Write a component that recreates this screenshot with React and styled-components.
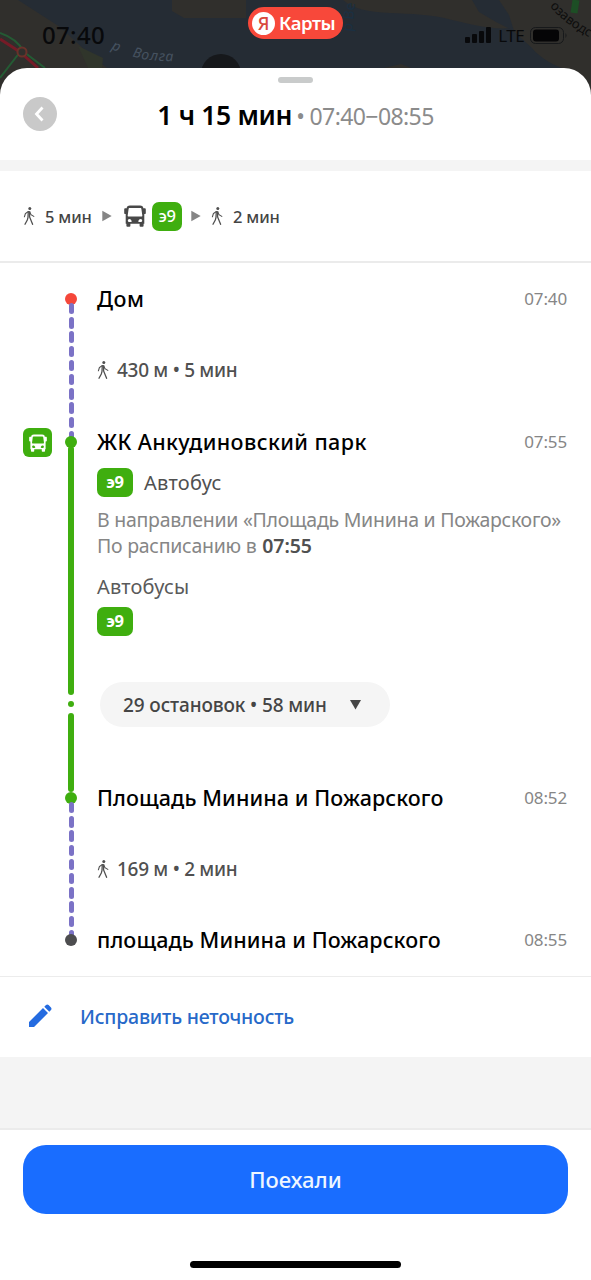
import React from 'react';
import styled, { createGlobalStyle } from 'styled-components';

const GlobalStyle = createGlobalStyle`
  * {
    box-sizing: border-box;
  }
  body {
    margin: 0;
    background: #fff;
    font-family: 'Noto Sans', 'Open Sans', sans-serif;
  }
`;

const green = '#3fae0f';
const violet = '#7b72c6';

const Screen = styled.div`
  position: relative;
  display: flex;
  flex-direction: column;
  width: 591px;
  height: 1280px;
  overflow: hidden;
  background: #252c34;
`;

const MapBackdrop = styled.svg`
  position: absolute;
  top: 0;
  left: 0;
`;

const StatusBar = styled.div`
  position: relative;
  display: grid;
  grid-template-columns: 1fr 95px 1fr;
  flex: none;
  height: 68px;
`;

const Clock = styled.div`
  padding: 20px 0 0 42px;
  font-size: 24px;
  font-weight: 500;
  line-height: 30px;
  letter-spacing: 0.3px;
  color: #08090b;
`;

const Brand = styled.div`
  display: flex;
  align-items: center;
  height: 32px;
  margin-top: 7px;
  padding-left: 4px;
  gap: 4px;
  border-radius: 16px;
  background: #f8483a;
  color: #fff;
  font-size: 18.5px;
  font-weight: 600;
  line-height: 30px;
  letter-spacing: -0.45px;
`;

const BrandMark = styled.span`
  display: flex;
  align-items: center;
  justify-content: center;
  flex: none;
  width: 23px;
  height: 23px;
  border-radius: 50%;
  background: #fff;
  color: #d8483c;
  font-size: 18px;
  font-weight: 500;
  line-height: 23px;
`;

const Indicators = styled.div`
  display: flex;
  align-items: center;
  justify-content: flex-end;
  height: 30px;
  margin-top: 20px;
  padding-right: 24px;
  gap: 6px;
  color: #08090b;
  font-size: 17px;
  letter-spacing: -0.6px;
`;

const Sheet = styled.main`
  position: relative;
  display: flex;
  flex: 1;
  flex-direction: column;
  border-radius: 27px 27px 0 0;
  background: #fff;
  overflow: hidden;
`;

const Handle = styled.div`
  flex: none;
  width: 35px;
  height: 6px;
  margin: 9px auto 0;
  border-radius: 3px;
  background: #c9cbcb;
`;

const Header = styled.header`
  display: grid;
  grid-template-columns: 34px 1fr 34px;
  align-items: center;
  flex: none;
  height: 77px;
  padding: 0 23px 15px;
`;

const BackButton = styled.button`
  display: flex;
  align-items: center;
  justify-content: center;
  width: 34px;
  height: 34px;
  padding: 0 2px 0 0;
  border: 0;
  border-radius: 50%;
  background: #c9c9c9;
`;

const Title = styled.h1`
  display: flex;
  align-items: baseline;
  justify-content: center;
  margin: 0;
  padding-top: 2px;
  font-size: 26.5px;
  font-weight: 600;
  line-height: 34px;
  letter-spacing: -0.35px;
  white-space: nowrap;
`;

const TitleTimes = styled.span`
  margin-left: 4px;
  color: #8b8b8b;
  font-size: 23px;
  font-weight: 400;
  letter-spacing: -0.6px;
`;

const Band = styled.div`
  flex: none;
  height: ${props => props.$height}px;
  background: #f4f4f4;
`;

const Summary = styled.div`
  display: flex;
  align-items: center;
  flex: none;
  height: 92px;
  padding-left: 23px;
  border-bottom: 2px solid #ebebeb;
  color: #444;
  font-size: 16.5px;
  font-weight: 500;
`;

const SummaryWalk = styled.div`
  display: flex;
  align-items: center;
  gap: 10px;
  width: 79px;
  letter-spacing: -0.2px;
  white-space: nowrap;
`;

const SummaryBus = styled.div`
  display: flex;
  align-items: center;
  gap: 6px;
  margin: 0 9px 0 12px;
`;

const LastWalk = styled(SummaryWalk)`
  margin-left: 10px;
`;

const Badge = styled.span`
  display: inline-flex;
  align-items: center;
  justify-content: center;
  width: ${props => (props.$compact ? 30 : 36)}px;
  height: 29px;
  padding-bottom: 2px;
  border-radius: 7px;
  background: ${green};
  color: #fff;
  font-size: 16.5px;
  font-weight: ${props => (props.$compact ? 500 : 700)};
  letter-spacing: -0.4px;
`;

const Route = styled.section`
  display: flex;
  flex-direction: column;
  flex: none;
  height: 713px;
  padding: 23px 24px 0 23px;
`;

const Leg = styled.div`
  display: grid;
  grid-template-columns: 42px 12px 1fr;
  flex: none;
  height: ${props => props.$height}px;
`;

const Transport = styled.div`
  display: flex;
  align-items: center;
  justify-content: center;
  width: 29px;
  height: 29px;
  margin-top: -1px;
  border-radius: 6px;
  background: ${green};
`;

const Rail = styled.div`
  display: flex;
  flex-direction: column;
  align-items: center;
  height: 100%;
  margin-top: 7px;
`;

const Dot = styled.div`
  flex: none;
  width: 12px;
  height: 12px;
  border-radius: 50%;
  background: ${props => props.$color};
`;

const Dashes = styled.div`
  display: flex;
  flex-direction: column;
  flex: 1;
  gap: 2.8px;
  min-height: 0;
  margin-top: -2px;
  overflow: hidden;
`;

const Dash = styled.i`
  flex: none;
  width: 5px;
  height: 11.4px;
  border-radius: 2.5px;
  background: ${violet};
`;

const Line = styled.div`
  flex: ${props => (props.$height ? 'none' : 1)};
  width: 6px;
  height: ${props => props.$height}px;
  margin-top: ${props => props.$top}px;
  border-radius: 3px;
  background: ${green};
`;

const LineGap = styled.div`
  flex: none;
  width: 6px;
  height: 6px;
  margin: 6px 0;
  border-radius: 50%;
  background: ${green};
`;

const Details = styled.div`
  padding-left: 20px;
  white-space: nowrap;
`;

const StopRow = styled.div`
  display: flex;
  align-items: center;
  justify-content: space-between;
  height: 26px;
  padding-bottom: 2px;
`;

const StopName = styled.h2`
  margin: 0;
  font-size: 21.5px;
  font-weight: 500;
  letter-spacing: ${props => props.$spacing}px;
`;

const StopTime = styled.time`
  color: #868686;
  font-size: 17px;
  letter-spacing: -0.15px;
`;

const WalkRow = styled.div`
  display: flex;
  align-items: center;
  gap: 8px;
  height: 26px;
  margin-top: 45px;
  color: #505050;
  font-size: 19px;
  font-weight: 500;
  letter-spacing: -0.3px;
`;

const RideRow = styled.div`
  display: flex;
  align-items: center;
  gap: 11px;
  height: 29px;
  margin-top: 13px;
  color: #505050;
  font-size: 20px;
  letter-spacing: 0.3px;
`;

const Direction = styled.p`
  margin: 10px 0 0;
  color: #868686;
  font-size: 19.5px;
  line-height: 26px;
  letter-spacing: -0.26px;

  b {
    margin-left: 1px;
    color: #505050;
    font-weight: 600;
    letter-spacing: -0.1px;
  }
`;

const Caption = styled.div`
  margin: 15px 0 7px;
  color: #5a5a5a;
  font-size: 20px;
  line-height: 26px;
  letter-spacing: 0.2px;
`;

const StopsButton = styled.button`
  display: flex;
  align-items: center;
  justify-content: space-between;
  width: 290px;
  height: 45px;
  margin: 46px 0 0 3px;
  padding: 0 29px 0 23px;
  border: 0;
  border-radius: 23px;
  background: #f5f5f5;
  color: #454545;
  font: 500 19px 'Noto Sans', sans-serif;
  letter-spacing: -0.12px;
`;

const FixLink = styled.a`
  display: flex;
  align-items: center;
  flex: none;
  gap: 28px;
  height: 81px;
  padding: 0 0 2px 28px;
  border-top: 1px solid #ececec;
  color: #2769c9;
  font-size: 19.5px;
  font-weight: 500;
  letter-spacing: -0.2px;
`;

const Footer = styled.footer`
  display: flex;
  flex-direction: column;
  align-items: center;
  flex: 1;
  padding: 15px 23px 0;
  border-top: 2px solid #ebebeb;
`;

const GoButton = styled.button`
  width: 545px;
  height: 69px;
  padding: 0 0 2px;
  border: 0;
  border-radius: 23px;
  background: #196dff;
  color: #eef6ff;
  font: 500 22px 'Noto Sans', sans-serif;
`;

const HomeIndicator = styled.div`
  width: 211px;
  height: 7px;
  margin-top: 47px;
  border-radius: 4px;
  background: #000;
`;

const WalkIcon = () => (
  <svg width="12" height="20" viewBox="0 0 12 20" fill="none" stroke="#505050">
    <circle cx="6.8" cy="2.5" r="1.5" fill="#505050" stroke="none" />
    <path
      d="M5.3 5.6 5 11.3 4.3 14 2 18.3M6.7 5.6 6.6 11 9.6 18.3"
      strokeWidth="1.3"
      strokeLinecap="round"
    />
    <path
      d="M5.4 5.5 2.4 7.6 1.4 10.8M6.7 6 8 8.7 10.8 10.4"
      strokeWidth="1.1"
      strokeLinecap="round"
    />
  </svg>
);

const BusIcon = ({ size, color }) => (
  <svg width={size} height={size} viewBox="0 0 22 22" fill={color}>
    <path
      fillRule="evenodd"
      d="M6 .5h10c2.2 0 3.2.8 3.3 2.8h1.2c.9 0 1.3.5 1.3 1.3v3.3c0 .9-.7 1.2-1.5 1.2v9.6h-.7v2.1c0 .6-.3.9-.9.9h-2.2c-.6 0-.9-.3-.9-.9v-2.1H6.4v2.1c0 .6-.3.9-.9.9H3.3c-.6 0-.9-.3-.9-.9v-2.1h-.7V9.1C.9 9.1.2 8.8.2 7.900V4.600c0-.8.4-1.300 1.300-1.300h1.200C2.800 1.300 3.800.5 6 .5ZM5.700 3c-.7 0-1 .3-1.100 1l-.9 6.600c-.1.7.2 1 .9 1h12.800c.7 0 1-.3.9-1L17.400 4c-.1-.7-.4-1-1.100-1ZM5.300 14a1.500 1.500 0 1 0 0 3h1.500c.7 0 1-.4.8-1-.3-1.200-1.200-2-2.300-2Zm11.400 0c-1.100 0-2 .8-2.300 2-.2.6.1 1 .8 1h1.500a1.500 1.500 0 0 0 0-3Z"
    />
  </svg>
);

const Arrow = () => (
  <svg width="10" height="12" viewBox="0 0 10 12">
    <path d="M.3 .8 9.7 6 .3 11.2Z" fill="#858585" />
  </svg>
);

const MapView = () => (
  <MapBackdrop width="591" height="110" viewBox="0 0 591 110">
    <path d="M0 0h18L60 27 88 53l19 15v42H0Z" fill="#302f2c" />
    <path d="M78 46 103 58 102 68H88Z" fill="#30352b" />
    <path d="M172 0h74v18h-62l-12-7Z" fill="#302f2c" />
    <path
      d="M343 0h248v110h-23V70c-14-4-28-12-36-22l-22-20c-18 2-40-4-58-8-20-6-42-6-62-7-22-1-37-4-47-13Z"
      fill="#302f2c"
    />
    <path d="M472 0h27l10 15 5 16-18-9-17-10Z" fill="#252c34" />
    <path d="M384 68 401 64 411 68Z" fill="#302f2c" />
    <path
      d="M0 33C12 37 20 44 24 52L45 68M0 78 20 52"
      fill="none"
      stroke="#245b34"
      strokeWidth="2"
    />
    <path
      d="M0 39 20 52 38 68"
      fill="none"
      stroke="#751b27"
      strokeWidth="3"
    />
    <circle cx="22" cy="52" r="4.5" fill="#302f2c" stroke="#69322a" strokeWidth="2" />
    <path d="M576 0 574 13" stroke="#1d4e25" strokeWidth="7" />
    <circle cx="221" cy="74" r="20" fill="#16181b" />
    <path id="river" d="M111 49C128 56 145 62 174 61" fill="none" />
    <path id="district" d="M550 6Q563 24 598 42" fill="none" />
    <g fill="#10151b" fontSize="14">
      <text fill="#465260" fontStyle="italic" letterSpacing="0.9">
        <textPath href="#river">р &#160; Волга</textPath>
      </text>
      <text transform="translate(352 32) rotate(-84)" fill="#1b3042">
        р Ве
      </text>
      <text fill="#0d0d0d" fontSize="13">
        <textPath href="#district">озаводс</textPath>
      </text>
    </g>
  </MapBackdrop>
);

const Signal = () => (
  <svg width="27" height="18" viewBox="0 0 27 18" fill="#08090b">
    <rect y="11" width="5" height="6" rx="1" />
    <rect x="7" y="8" width="5" height="9" rx="1" />
    <rect x="14" y="5" width="5" height="12" rx="1" />
    <rect x="21" y="1" width="5" height="16" rx="1" />
  </svg>
);

const Battery = () => (
  <svg width="37" height="17" viewBox="0 0 37 17">
    <rect x=".5" y=".5" width="33" height="16" rx="5" fill="none" stroke="#17191b" />
    <rect x="3" y="2.5" width="26" height="12" rx="3" fill="#050506" />
    <path d="M35.5 6q2 2.5 0 5Z" fill="#17191b" />
  </svg>
);

const Stop = ({ name, time, spacing = 0.1 }) => (
  <StopRow>
    <StopName $spacing={spacing}>{name}</StopName>
    <StopTime>{time}</StopTime>
  </StopRow>
);

const WalkLeg = ({ color, height, name, time, spacing, distance }) => (
  <Leg $height={height}>
    <div />
    <Rail>
      <Dot $color={color} />
      <Dashes>
        {Array.from({ length: 10 }, (_, i) => (
          <Dash key={i} />
        ))}
      </Dashes>
    </Rail>
    <Details>
      <Stop name={name} time={time} spacing={spacing} />
      <WalkRow>
        <WalkIcon />
        {distance}
      </WalkRow>
    </Details>
  </Leg>
);

const App = () => (
  <Screen>
    <GlobalStyle />
    <MapView />
    <StatusBar>
      <Clock>07:40</Clock>
      <Brand>
        <BrandMark>Я</BrandMark>
        Карты
      </Brand>
      <Indicators>
        <Signal />
        LTE
        <Battery />
      </Indicators>
    </StatusBar>

    <Sheet>
      <Handle />
      <Header>
        <BackButton aria-label="Назад">
          <svg width="10" height="16" viewBox="0 0 10 16" fill="none">
            <path d="M8.5 1.5 2.5 8 8.5 14.5" stroke="#fff" strokeWidth="2.8" />
          </svg>
        </BackButton>
        <Title>
          1 ч 15 мин
          <TitleTimes>• 07:40−08:55</TitleTimes>
        </Title>
      </Header>
      <Band $height={11} />

      <Summary>
        <SummaryWalk>
          <WalkIcon />5 мин
        </SummaryWalk>
        <Arrow />
        <SummaryBus>
          <BusIcon size={22} color="#484848" />
          <Badge $compact>э9</Badge>
        </SummaryBus>
        <Arrow />
        <LastWalk>
          <WalkIcon />2 мин
        </LastWalk>
      </Summary>

      <Route>
        <WalkLeg
          color="#f5473a"
          height={143}
          name="Дом"
          time="07:40"
          spacing={0.6}
          distance="430 м • 5 мин"
        />
        <Leg $height={356}>
          <Transport>
            <BusIcon size={18} color="#fff" />
          </Transport>
          <Rail>
            <Dot $color={green} />
            <Line $height={249} $top={-2} />
            <LineGap />
            <Line $top={0} />
          </Rail>
          <Details>
            <Stop name="ЖК Анкудиновский парк" time="07:55" spacing={0.4} />
            <RideRow>
              <Badge>э9</Badge>
              Автобус
            </RideRow>
            <Direction>
              В направлении «Площадь Минина и Пожарского»
              <br />
              По расписанию в <b>07:55</b>
            </Direction>
            <Caption>Автобусы</Caption>
            <Badge>э9</Badge>
            <StopsButton>
              29 остановок • 58 мин
              <svg width="11" height="10" viewBox="0 0 11 10">
                <path d="M0 0h11L5.5 9.5Z" fill="#454545" />
              </svg>
            </StopsButton>
          </Details>
        </Leg>
        <WalkLeg
          color={green}
          height={142}
          name="Площадь Минина и Пожарского"
          time="08:52"
          distance="169 м • 2 мин"
        />
        <Leg $height={26}>
          <div />
          <Rail>
            <Dot $color="#4d4d4f" />
          </Rail>
          <Details>
            <Stop name="площадь Минина и Пожарского" time="08:55" />
          </Details>
        </Leg>
      </Route>

      <FixLink>
        <svg width="24" height="24" viewBox="0 0 24 24" fill="#246be0">
          <path d="M1 23v-5L15 4l5 5L6 23ZM16.3 2.7 18 1q1.300-1.100 2.600 0L23 3.400q1 1.300 0 2.600l-1.700 1.700Z" />
        </svg>
        Исправить неточность
      </FixLink>
      <Band $height={71} />
      <Footer>
        <GoButton>Поехали</GoButton>
        <HomeIndicator />
      </Footer>
    </Sheet>
  </Screen>
);

export default App;
